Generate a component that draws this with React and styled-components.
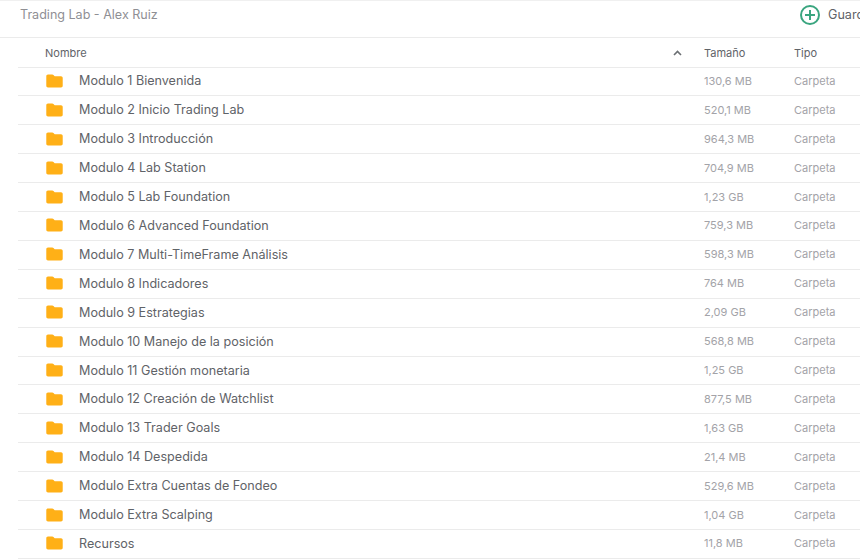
import styled, { createGlobalStyle } from 'styled-components'

const GlobalStyle = createGlobalStyle`
  html, body {
    margin: 0;
    padding: 0;
    background: #fff;
    overflow: hidden;
  }
  body {
    font-family: Inter, "Noto Sans", sans-serif;
  }
`

const Page = styled('div')`
  width: 860px;
  height: 559px;
  overflow: hidden;
`

const TopBar = styled('header')`
  display: flex;
  align-items: center;
  justify-content: space-between;
  box-sizing: border-box;
  height: 38px;
  padding: 0 0 9px 20px;
  border-top: 1px solid #f0f0f0;
  border-bottom: 1px solid #ebebeb;
`

const Title = styled('h1')`
  margin: 0;
  color: #8f8f94;
  font-size: 12.55px;
  font-weight: 400;
`

const SaveButton = styled('div')`
  display: flex;
  align-items: center;
  gap: 8px;
  width: 60px;
  flex-shrink: 0;
  overflow: hidden;
  color: #5f6368;
  font-size: 12.6px;
  white-space: nowrap;

  svg {
    flex-shrink: 0;
  }
`

const Table = styled('div')`
  margin-left: 18px;
`

const Row = styled('div')`
  display: grid;
  grid-template-columns: 61px 1fr 90px 66px;
  align-items: center;
  box-sizing: border-box;
  height: 28.92px;
  padding-bottom: 1px;
  border-bottom: 1px solid #ebebeb;
`

const HeadRow = styled(Row)`
  height: 29.5px;
  padding: 2px 0 0;
  grid-template-columns: 27px 1fr 31px 90px 66px;
`

const HeadCell = styled('div')`
  color: #5f6368;
  font-size: 11px;
  white-space: nowrap;
`

const SortArrow = styled('svg')`
  display: block;
  width: 9px;
  height: 6px;
`

const IconCell = styled('div')`
  display: flex;
  padding-left: 28px;
`

const Name = styled('div')`
  color: #5f6368;
  font-size: 12.6px;
  white-space: nowrap;
`

const Meta = styled('div')`
  color: #a3a3a8;
  font-size: 11px;
  white-space: nowrap;
`

const FolderIcon = () => (
  <svg width="17" height="14" viewBox="0 0 18 15">
    <path
      d="M2 .5h4.6c.5 0 1 .2 1.3.6L9.2 2.5H16c1 0 1.8.8 1.8 1.8v8.4c0 1-.8 1.8-1.8 1.8H2c-1 0-1.8-.8-1.8-1.8V2.3C.2 1.3 1 .5 2 .5z"
      fill="#ffb017"
    />
  </svg>
)

const PlusCircle = () => (
  <svg width="20" height="20" viewBox="0 0 20 20" fill="none" stroke="#3aa57f" strokeWidth="2">
    <circle cx="10" cy="10" r="9" />
    <path d="M10 5v10M5 10h10" />
  </svg>
)

const folders = [
  ['Modulo 1 Bienvenida', '130,6 MB'],
  ['Modulo 2 Inicio Trading Lab', '520,1 MB'],
  ['Modulo 3 Introducción', '964,3 MB'],
  ['Modulo 4 Lab Station', '704,9 MB'],
  ['Modulo 5 Lab Foundation', '1,23 GB'],
  ['Modulo 6 Advanced Foundation', '759,3 MB'],
  ['Modulo 7 Multi-TimeFrame Análisis', '598,3 MB'],
  ['Modulo 8 Indicadores', '764 MB'],
  ['Modulo 9 Estrategias', '2,09 GB'],
  ['Modulo 10 Manejo de la posición', '568,8 MB'],
  ['Modulo 11 Gestión monetaria', '1,25 GB'],
  ['Modulo 12 Creación de Watchlist', '877,5 MB'],
  ['Modulo 13 Trader Goals', '1,63 GB'],
  ['Modulo 14 Despedida', '21,4 MB'],
  ['Modulo Extra Cuentas de Fondeo', '529,6 MB'],
  ['Modulo Extra Scalping', '1,04 GB'],
  ['Recursos', '11,8 MB'],
]

const App = () => {
  return (
    <Page>
      <GlobalStyle />
      <TopBar>
        <Title>Trading Lab - Alex Ruiz</Title>
        <SaveButton>
          <PlusCircle />
          Guardar
        </SaveButton>
      </TopBar>
      <Table>
        <HeadRow>
          <span />
          <HeadCell>Nombre</HeadCell>
          <SortArrow viewBox="0 0 9 6">
            <path d="M1 5l3.5-3.5L8 5" fill="none" stroke="#6b6f73" strokeWidth="1.6" />
          </SortArrow>
          <HeadCell>Tamaño</HeadCell>
          <HeadCell>Tipo</HeadCell>
        </HeadRow>
        {folders.map(([name, size]) => (
          <Row key={name}>
            <IconCell>
              <FolderIcon />
            </IconCell>
            <Name>{name}</Name>
            <Meta>{size}</Meta>
            <Meta>Carpeta</Meta>
          </Row>
        ))}
      </Table>
    </Page>
  )
}

export default App
